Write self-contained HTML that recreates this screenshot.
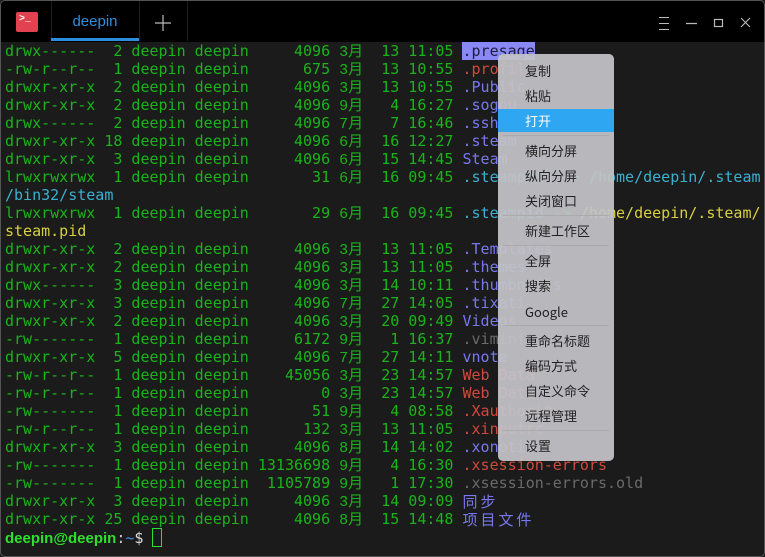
<!DOCTYPE html>
<html><head><meta charset="utf-8"><style>
*{margin:0;padding:0;box-sizing:border-box}
body{width:765px;height:557px;background:#1c1c1c;overflow:hidden;position:relative;font-family:"Liberation Mono","Noto Sans CJK SC",monospace}
#win{position:absolute;left:0;top:0;width:765px;height:557px;border:1px solid #555;border-radius:5px;overflow:hidden;background:#1b1b1b}
#tb{position:absolute;left:0;top:0;width:765px;height:41px;background:#000}
.div{position:absolute;top:0;width:1px;height:40px;background:#1e1e1e}
#icon{position:absolute;left:15px;top:11px;width:22px;height:20px;background:#e0424f;border-radius:2px;color:#fff;font:bold 10px "Liberation Mono",monospace;line-height:16px;padding-left:3px}
#tab{position:absolute;left:50px;top:0;width:88px;height:40px;color:#2d8fdc;font:15px "Liberation Sans","Noto Sans CJK SC",sans-serif;text-align:center;line-height:42px}
#tab:after{content:"";position:absolute;left:0;right:0;bottom:0;height:3px;background:#2d8fdc}
pre{position:absolute;left:4px;top:41px;font-size:15px;line-height:18px;color:#19b419;white-space:pre}
.m,.z{display:inline-block;height:18px;line-height:18px;vertical-align:top;overflow:visible;font-size:15px;position:relative;top:2px}
.m{width:24px;font-family:"Liberation Mono","Noto Sans CJK SC",monospace}
.z{width:18px;font-family:"Noto Sans CJK SC",sans-serif;top:1px}
.b{color:#7878f0}.r{color:#d0493b}.c{color:#3ab0d0}.y{color:#d8d040}.k{color:#6a6a6a}
.sel{background:#8a88f5;color:#1c1c40}
#menu{position:absolute;left:497px;top:53px;width:116px;height:407px;background:rgba(196,196,200,.93);border-radius:5px;font:13px "Noto Sans CJK SC",sans-serif;color:#222}
.it{position:absolute;left:0;width:116px;height:23px;line-height:23px;padding-left:27px}
.hl{background:#2ea6f2;color:#fff}
.sep{position:absolute;left:5px;width:106px;height:1px;background:#aaa}
</style></head><body><div id="win">
<div id="tb">
<div id="icon">&gt;_</div>
<div class="div" style="left:50px"></div><div class="div" style="left:138px"></div><div class="div" style="left:186px"></div>
<div id="tab">deepin</div>
<svg style="position:absolute;left:152px;top:12px" width="20" height="20"><path d="M10 2V18M2 10H18" stroke="#bbb" stroke-width="1.2"/></svg>
<svg style="position:absolute;left:650px;top:12px" width="110" height="20">
<path d="M8 4.5H18M8 10.5H18M8 16.5H18" stroke="#bbb" stroke-width="1"/>
<path d="M35 10.5H46" stroke="#bbb" stroke-width="1.2"/>
<rect x="63.5" y="6.5" width="8" height="7" fill="none" stroke="#bbb" stroke-width="1.2"/>
<path d="M90 5L99 14M99 5L90 14" stroke="#bbb" stroke-width="1.1"/>
</svg>
</div>
<pre>drwx------  2 deepin deepin     4096 <span class="m">3月</span>  13 11:05 <span class="sel">.presage</span>
-rw-r--r--  1 deepin deepin      675 <span class="m">3月</span>  13 10:55 <span class="r">.profile</span>
drwxr-xr-x  2 deepin deepin     4096 <span class="m">3月</span>  13 10:55 <span class="b">.Public</span>
drwxr-xr-x  2 deepin deepin     4096 <span class="m">9月</span>   4 16:27 <span class="b">.sogou</span>
drwx------  2 deepin deepin     4096 <span class="m">7月</span>   7 16:46 <span class="b">.ssh</span>
drwxr-xr-x 18 deepin deepin     4096 <span class="m">6月</span>  16 12:27 <span class="b">.steam</span>
drwxr-xr-x  3 deepin deepin     4096 <span class="m">6月</span>  15 14:45 <span class="b">Steam</span>
lrwxrwxrwx  1 deepin deepin       31 <span class="m">6月</span>  16 09:45 <span class="c">.steampath -&gt; /home/deepin/.steam</span>
<span class="c">/bin32/steam</span>
lrwxrwxrwx  1 deepin deepin       29 <span class="m">6月</span>  16 09:45 <span class="c">.steampid</span> -&gt; <span class="y">/home/deepin/.steam/</span>
<span class="y">steam.pid</span>
drwxr-xr-x  2 deepin deepin     4096 <span class="m">3月</span>  13 11:05 <span class="b">.Templates</span>
drwxr-xr-x  2 deepin deepin     4096 <span class="m">3月</span>  13 11:05 <span class="b">.themes</span>
drwx------  3 deepin deepin     4096 <span class="m">3月</span>  14 10:11 <span class="b">.thumbnails</span>
drwxr-xr-x  3 deepin deepin     4096 <span class="m">7月</span>  27 14:05 <span class="b">.tixati</span>
drwxr-xr-x  2 deepin deepin     4096 <span class="m">3月</span>  20 09:49 <span class="b">Videos</span>
-rw-------  1 deepin deepin     6172 <span class="m">9月</span>   1 16:37 <span class="k">.viminfo</span>
drwxr-xr-x  5 deepin deepin     4096 <span class="m">7月</span>  27 14:11 <span class="b">vnote</span>
-rw-r--r--  1 deepin deepin    45056 <span class="m">3月</span>  23 14:57 <span class="r">Web Data</span>
-rw-r--r--  1 deepin deepin        0 <span class="m">3月</span>  23 14:57 <span class="r">Web Data</span>
-rw-------  1 deepin deepin       51 <span class="m">9月</span>   4 08:58 <span class="r">.Xauthority</span>
-rw-r--r--  1 deepin deepin      132 <span class="m">3月</span>  13 11:05 <span class="r">.xinputrc</span>
drwxr-xr-x  3 deepin deepin     4096 <span class="m">8月</span>  14 14:02 <span class="b">.xonotic</span>
-rw-------  1 deepin deepin 13136698 <span class="m">9月</span>   4 16:30 <span class="r">.xsession-errors</span>
-rw-------  1 deepin deepin  1105789 <span class="m">9月</span>   1 17:30 <span class="k">.xsession-errors.old</span>
drwxr-xr-x  3 deepin deepin     4096 <span class="m">3月</span>  14 09:09 <span class="b"><span class="z">同</span><span class="z">步</span></span>
drwxr-xr-x 25 deepin deepin     4096 <span class="m">8月</span>  15 14:48 <span class="b"><span class="z">项</span><span class="z">目</span><span class="z">文</span><span class="z">件</span></span>
<b style="color:#2ee02e;font-family:'Liberation Sans',sans-serif;font-size:15px">deepin@deepin</b><span style="color:#ccc">:</span><span style="color:#3a8ee0">~</span><span style="color:#ddd">$ </span><span style="display:inline-block;width:10px;height:19px;border:1px solid #2ee02e;vertical-align:-4px"></span></pre>
<div id="menu">
<div class="it" style="top:5px">复制</div>
<div class="it" style="top:30px">粘贴</div>
<div class="it hl" style="top:55px">打开</div>
<div class="sep" style="top:81px"></div>
<div class="it" style="top:85px">横向分屏</div>
<div class="it" style="top:110px">纵向分屏</div>
<div class="it" style="top:135px">关闭窗口</div>
<div class="sep" style="top:161px"></div>
<div class="it" style="top:165px">新建工作区</div>
<div class="sep" style="top:191px"></div>
<div class="it" style="top:195px">全屏</div>
<div class="it" style="top:220px">搜索</div>
<div class="it" style="top:246px">Google</div>
<div class="sep" style="top:271px"></div>
<div class="it" style="top:275px">重命名标题</div>
<div class="it" style="top:300px">编码方式</div>
<div class="it" style="top:325px">自定义命令</div>
<div class="it" style="top:350px">远程管理</div>
<div class="sep" style="top:376px"></div>
<div class="it" style="top:380px">设置</div>
</div>
</div></body></html>
